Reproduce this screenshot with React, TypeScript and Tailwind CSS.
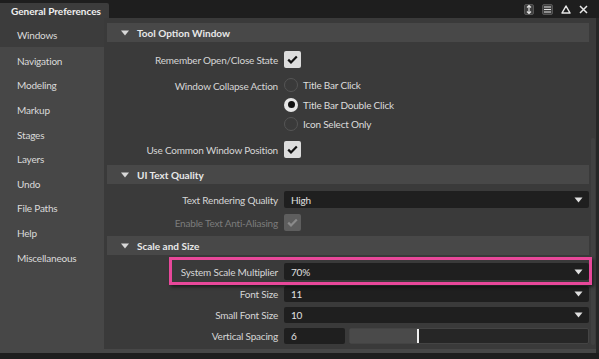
import React from "react";

const font = { fontFamily: 'Lato, "Open Sans", sans-serif' };

function Check({ disabled = false }: { disabled?: boolean }) {
  return (
    <div
      className={`w-[17px] h-[17px] rounded-[2px] flex items-center justify-center ${
        disabled ? "bg-[#5e5e5e]" : "bg-[#dcdcdc]"
      }`}
    >
      <svg width="11" height="9" viewBox="0 0 11 9">
        <path
          d="M1.2 4.6 L4 7.4 L9.8 1.4"
          fill="none"
          stroke={disabled ? "#8a8a8a" : "#111"}
          strokeWidth="2.2"
        />
      </svg>
    </div>
  );
}

function Radio({ on = false }: { on?: boolean }) {
  return on ? (
    <div className="w-[14px] h-[14px] rounded-full bg-[#e6e6e6] flex items-center justify-center">
      <div className="w-[7px] h-[7px] rounded-full bg-[#111]" />
    </div>
  ) : (
    <div className="w-[14px] h-[14px] rounded-full border border-[#555] bg-[#3a3a3a]" />
  );
}

function Arrow() {
  return (
    <svg width="9" height="6" viewBox="0 0 9 6">
      <path d="M0.5 0.5 H8.5 L4.5 5.5 Z" fill="#e0e0e0" />
    </svg>
  );
}

function Dropdown({ value, h = 17 }: { value: string; h?: number }) {
  return (
    <div
      className="w-[305px] bg-[#1f1f1f] rounded-[2px] flex items-center justify-between pl-[7px] pr-[6px] text-[#e0e0e0]"
      style={{ height: h }}
    >
      <span>{value}</span>
      <Arrow />
    </div>
  );
}

function Header({ title }: { title: string }) {
  return (
    <div className="h-[19px] bg-[#484848] flex items-center pl-[14px] text-[#e8e8e8] font-bold shrink-0 tracking-normal">
      <svg width="8" height="6" viewBox="0 0 8 6" className="mr-[8px]">
        <path d="M0 0.5 H8 L4 5.5 Z" fill="#d8d8d8" />
      </svg>
      {title}
    </div>
  );
}

function Row({
  label,
  children,
  h,
  disabled = false,
}: {
  label: string;
  children: React.ReactNode;
  h: number;
  disabled?: boolean;
}) {
  return (
    <div className="flex items-center shrink-0" style={{ height: h }}>
      <div
        className={`w-[172px] pr-[1px] text-right shrink-0 whitespace-nowrap ${
          disabled ? "text-[#7c7c7c]" : "text-[#d6d6d6]"
        }`}
      >
        {label}
      </div>
      <div className="pl-[5px]">{children}</div>
    </div>
  );
}

function Gap({ h }: { h: number }) {
  return <div className="shrink-0" style={{ height: h }} />;
}

export default function App() {
  const side = [
    "Navigation",
    "Modeling",
    "Markup",
    "Stages",
    "Layers",
    "Undo",
    "File Paths",
    "Help",
    "Miscellaneous",
  ];
  return (
    <div
      className="w-[599px] h-[359px] bg-[#1e1e1e] flex flex-col overflow-hidden text-[10px] leading-none tracking-[-0.2px]"
      style={font}
    >
      {/* top bar */}
      <div className="h-[18px] flex items-end justify-between shrink-0">
        <div className="h-[15px] w-[109px] bg-[#3c3c3c] rounded-tr-[2px] flex items-center pl-[11px] text-[#f0f0f0] font-bold whitespace-nowrap tracking-normal">
          General Preferences
        </div>
        <div className="flex items-center gap-[8px] pr-[11px] self-center pt-[1px]">
          <div className="w-[10px] h-[11px] rounded-[2px] bg-[#3e3e3e] border border-[#555] flex items-center justify-center">
            <svg width="6" height="9" viewBox="0 0 6 9">
              <path d="M3 0.5 V8.5 M1 2.5 L3 0.5 L5 2.5 M1 6.5 L3 8.5 L5 6.5" stroke="#e0e0e0" strokeWidth="1.2" fill="none" />
            </svg>
          </div>
          <div className="w-[11px] h-[11px] rounded-[2px] bg-[#3e3e3e] border border-[#555] flex items-center justify-center">
            <svg width="7" height="7" viewBox="0 0 7 7">
              <path d="M0 1 H7 M0 3.5 H7 M0 6 H7" stroke="#e0e0e0" strokeWidth="1.2" />
            </svg>
          </div>
          <svg width="10" height="9" viewBox="0 0 10 9">
            <path d="M5 1 L9 8 H1 Z" stroke="#e8e8e8" strokeWidth="1.5" fill="none" strokeLinejoin="round" />
          </svg>
          <svg width="9" height="9" viewBox="0 0 9 9">
            <path d="M1 1 L8 8 M8 1 L1 8" stroke="#e8e8e8" strokeWidth="1.5" />
          </svg>
        </div>
      </div>

      {/* body */}
      <div className="flex h-[335px] shrink-0">
        {/* sidebar */}
        <div className="w-[104px] bg-[#474747] flex flex-col text-[#dadada]">
          <div className="h-[29px] bg-[#3c3c3c] flex items-center pl-[17px] pt-[4px] shrink-0">
            Windows
          </div>
          {side.map((s) => (
            <div key={s} className="h-[24.6px] flex items-center pl-[17px] pt-[3px] shrink-0">
              {s}
            </div>
          ))}
        </div>

        {/* content */}
        <div className="flex-1 bg-[#3a3a3a] flex flex-col">
          <div className="flex-1 flex relative">
            <div className="flex-1 pl-[3px] pt-[5px] flex flex-col">
              <Header title="Tool Option Window" />
              <Gap h={9} />
              <Row label="Remember Open/Close State" h={17}>
                <Check />
              </Row>
              <Gap h={10} />
              <div className="flex items-start shrink-0">
                <div className="w-[172px] pr-[1px] text-right shrink-0 text-[#d6d6d6] pt-[3px] whitespace-nowrap">
                  Window Collapse Action
                </div>
                <div className="flex flex-col gap-[5.5px] pl-[5px]">
                  {[
                    ["Title Bar Click", false],
                    ["Title Bar Double Click", true],
                    ["Icon Select Only", false],
                  ].map(([t, on]) => (
                    <div key={t as string} className="flex items-center gap-[5px] h-[14px] text-[#dcdcdc]">
                      <Radio on={on as boolean} />
                      <span>{t as string}</span>
                    </div>
                  ))}
                </div>
              </div>
              <Gap h={10} />
              <Row label="Use Common Window Position" h={17}>
                <Check />
              </Row>
              <Gap h={7} />
              <Header title="UI Text Quality" />
              <Gap h={7} />
              <Row label="Text Rendering Quality" h={17}>
                <Dropdown value="High" />
              </Row>
              <Gap h={6} />
              <Row label="Enable Text Anti-Aliasing" h={17} disabled>
                <Check disabled />
              </Row>
              <Gap h={5} />
              <Header title="Scale and Size" />
              <Gap h={8} />
              <Row label="System Scale Multiplier" h={17}>
                <Dropdown value="70%" />
              </Row>
              <Gap h={6} />
              <Row label="Font Size" h={16}>
                <Dropdown value="11" h={16} />
              </Row>
              <Gap h={5} />
              <Row label="Small Font Size" h={16}>
                <Dropdown value="10" h={16} />
              </Row>
              <Gap h={5} />
              <Row label="Vertical Spacing" h={16}>
                <div className="flex items-center gap-[4px]">
                  <div className="w-[61px] h-[16px] bg-[#1f1f1f] rounded-[2px] flex items-center pl-[7px] text-[#e0e0e0]">
                    6
                  </div>
                  <div className="w-[240px] h-[16px] bg-[#262626] border border-[#444] rounded-[2px] flex items-stretch">
                    <div className="w-[67px] bg-[#4a4a4a]" />
                    <div className="w-[2px] bg-[#f0f0f0]" />
                  </div>
                </div>
              </Row>
            </div>
            {/* scrollbar */}
            <div className="w-[7px] flex justify-center pt-[120px] pb-[4px]">
              <div className="w-[4px] h-full bg-[#414141] rounded-[2px]" />
            </div>
            {/* highlight annotation */}
            <div className="absolute left-[65px] top-[239px] w-[423px] h-[28px] border-[3px] border-[#e8489a] shadow-[2px_2px_3px_rgba(0,0,0,0.5)] pointer-events-none" />
          </div>
          <div className="h-[4px] bg-[#474747] shrink-0" />
        </div>
        <div className="w-[3px] bg-[#262626]" />
      </div>
    </div>
  );
}
